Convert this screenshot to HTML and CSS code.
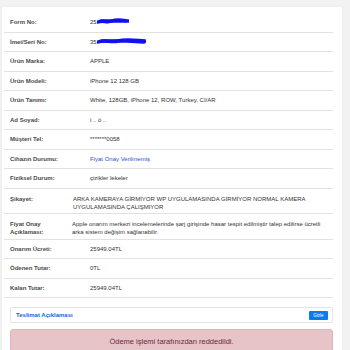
FILE: index.html
```html
<!DOCTYPE html>
<html lang="tr">
<head>
  <meta charset="UTF-8">
  <title>Servis Formu</title>
  <link rel="stylesheet" href="styles.css">
</head>
<body>
  <div class="detail-card">
    <div class="row">
      <span class="label">Form No:</span>
      <span class="value">25<svg class="scribble" width="32" height="7" viewBox="0 0 32 7"><path d="M1 4 C6 2 10 5 15 3 S24 2 31 3" /><path d="M4 3 L29 3" /></svg></span>
    </div>
    <div class="row">
      <span class="label">İmei/Seri No:</span>
      <span class="value">35<svg class="scribble" width="49" height="8" viewBox="0 0 49 8"><path d="M1 5 C8 2 14 6 21 4 S34 3 48 4" /><path d="M5 4 L30 4 L47 5" /></svg></span>
    </div>
    <div class="row">
      <span class="label">Ürün Marka:</span>
      <span class="value">APPLE</span>
    </div>
    <div class="row">
      <span class="label">Ürün Modeli:</span>
      <span class="value">iPhone 12 128 GB</span>
    </div>
    <div class="row">
      <span class="label">Ürün Tanımı:</span>
      <span class="value">White, 128GB, iPhone 12, ROW, Turkey, CI/AR</span>
    </div>
    <div class="row">
      <span class="label">Ad Soyad:</span>
      <span class="value">i .. ö ..</span>
    </div>
    <div class="row">
      <span class="label">Müşteri Tel:</span>
      <span class="value">*******0058</span>
    </div>
    <div class="row">
      <span class="label">Cihazın Durumu:</span>
      <span class="value status">Fiyat Onay Verilmemiş</span>
    </div>
    <div class="row">
      <span class="label">Fiziksel Durum:</span>
      <span class="value">çizikler lekeler</span>
    </div>
    <div class="row row-text complaint">
      <span class="label">Şikayet:</span>
      <span class="value">ARKA KAMERAYA GİRMİYOR WP UYGULAMASINDA GİRMİYOR NORMAL KAMERA UYGULAMASINDA ÇALIŞMIYOR</span>
    </div>
    <div class="row row-text approval">
      <span class="label">Fiyat Onay Açıklaması:</span>
      <span class="value">Apple onarım merkezi incelemelerinde şarj girişinde hasar tespit edilmiştir talep edilirse ücretli arka sistem değişim sağlanabilir.</span>
    </div>
    <div class="row">
      <span class="label">Onarım Ücreti:</span>
      <span class="value">25949.04TL</span>
    </div>
    <div class="row">
      <span class="label">Ödenen Tutar:</span>
      <span class="value">0TL</span>
    </div>
    <div class="row">
      <span class="label">Kalan Tutar:</span>
      <span class="value">25949.04TL</span>
    </div>

    <div class="delivery-box">
      <span class="delivery-title">Teslimat Açıklaması</span>
      <button class="btn-hide">Gizle</button>
    </div>

    <div class="alert-danger">Ödeme işlemi tarafınızdan reddedildi.</div>
  </div>
</body>
</html>
```

FILE: styles.css
```css
body {
  font-family: 'Liberation Sans', Arial, sans-serif;
  background-color: #f2f2f2;
  margin: 0;
  padding: 7px 8px 0 2px;
}
.detail-card {
  background-color: #fff;
  padding: 6px 9px 20px 2px;
  box-shadow: 0 0 2px rgba(0, 0, 0, 0.06);
}
.row {
  display: flex;
  align-items: center;
  height: 19.5px;
  box-sizing: border-box;
  padding: 0 6px;
  border-bottom: 1px solid #e2e2e2;
  font-size: 6px;
  line-height: 8px;
}
.label {
  width: 80px;
  flex-shrink: 0;
  color: #4a4a4a;
  font-weight: bold;
}
.value {
  flex: 1;
  color: #333;
}
.status { color: #2a4fd0; }
.scribble {
  vertical-align: middle;
  margin-top: -2px;
}
.scribble path {
  fill: none;
  stroke: #1010f2;
  stroke-width: 3.5;
  stroke-linecap: round;
}
.row-text {
  height: auto;
  align-items: flex-start;
}
.row-text .label { width: 56px; margin-right: 6px; }
.row-text .value { padding-right: 6px; }
.complaint { padding-top: 6px; padding-bottom: 2px; }
.complaint .value { padding-left: 1px; }
.approval { padding-top: 6px; padding-bottom: 3px; }
.delivery-box {
  display: flex;
  align-items: center;
  justify-content: space-between;
  height: 16px;
  box-sizing: border-box;
  margin: 9px 0 0 6px;
  padding: 0 4px 0 5px;
  border: 1px solid #e4e4e4;
  border-radius: 2px;
}
.delivery-title {
  font-size: 6px;
  font-weight: bold;
  color: #1a66d2;
}
.btn-hide {
  font-family: inherit;
  font-size: 4.5px;
  width: 19px;
  height: 9px;
  padding: 0;
  color: #fff;
  background-color: #0b7bf0;
  border: none;
  border-radius: 1px;
}
.alert-danger {
  margin: 6px 0 0 6px;
  padding: 7px 0 10px;
  background-color: #e6c4c7;
  border: 1px solid #dcb6ba;
  border-radius: 3px;
  color: #6e2a36;
  font-size: 7.5px;
  text-align: center;
}
```
